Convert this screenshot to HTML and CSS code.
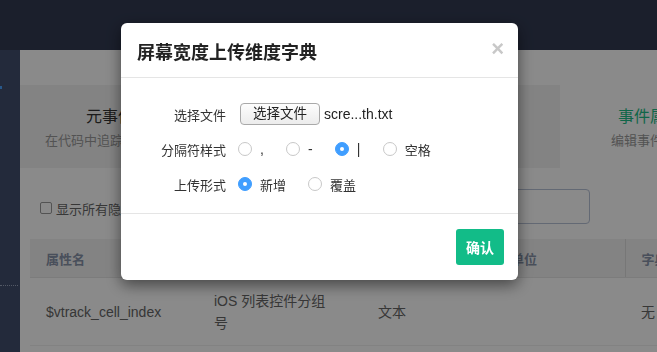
FILE: index.html
```html
<!DOCTYPE html>
<html lang="zh-CN">
<head>
    <meta charset="UTF-8">
    <meta name="viewport" content="width=device-width, initial-scale=1.0">
    <title>维度字典</title>
    <link rel="stylesheet" href="styles.css">
</head>
<body>

    <div class="navbar"></div>

    <div class="layout">
        <aside class="sidebar">
            <span class="side-mark"></span>
            <div class="side-dots"></div>
        </aside>

        <main class="main">
            <div class="crumb"></div>

            <div class="cards">
                <div class="card">
                    <div class="card-title">元事件</div>
                    <div class="card-desc">在代码中追踪的元事件</div>
                </div>
                <div class="card">
                    <div class="card-title">虚拟事件</div>
                    <div class="card-desc">组合多个元事件</div>
                </div>
                <div class="card">
                    <div class="card-title">用户属性</div>
                    <div class="card-desc">编辑用户属性</div>
                </div>
                <div class="card active">
                    <div class="card-title">事件属性</div>
                    <div class="card-desc">编辑事件属性</div>
                </div>
            </div>

            <div class="toolbar">
                <label class="check"><span class="check-box"></span>显示所有隐藏属性</label>
                <div class="search"></div>
            </div>

            <table class="props">
                <colgroup>
                    <col style="width: 168px">
                    <col style="width: 164px">
                    <col style="width: 107px">
                    <col style="width: 156px">
                    <col style="width: 120px">
                </colgroup>
                <thead>
                    <tr>
                        <th>属性名</th>
                        <th>显示名</th>
                        <th>类型</th>
                        <th>显示单位</th>
                        <th class="sep">字典</th>
                    </tr>
                </thead>
                <tbody>
                    <tr>
                        <td>$vtrack_cell_index</td>
                        <td class="wrap">iOS 列表控件分组号</td>
                        <td>文本</td>
                        <td></td>
                        <td>无</td>
                    </tr>
                </tbody>
            </table>
        </main>
    </div>

    <div class="backdrop"></div>

    <div class="modal">
        <div class="modal-header">
            <h3 class="modal-title">屏幕宽度上传维度字典</h3>
            <span class="close">&times;</span>
        </div>
        <div class="modal-body">
            <div class="form-row">
                <span class="form-label">选择文件</span>
                <div class="form-control">
                    <span class="file-btn">选择文件</span>
                    <span class="file-name">scre...th.txt</span>
                </div>
            </div>
            <div class="form-row">
                <span class="form-label">分隔符样式</span>
                <div class="form-control">
                    <label class="radio-item"><span class="radio"></span><span class="sym">,</span></label>
                    <label class="radio-item"><span class="radio"></span><span class="sym">-</span></label>
                    <label class="radio-item"><span class="radio checked"></span><span class="sym">|</span></label>
                    <label class="radio-item"><span class="radio"></span>空格</label>
                </div>
            </div>
            <div class="form-row">
                <span class="form-label">上传形式</span>
                <div class="form-control">
                    <label class="radio-item"><span class="radio checked"></span>新增</label>
                    <label class="radio-item"><span class="radio"></span>覆盖</label>
                </div>
            </div>
        </div>
        <div class="modal-footer">
            <button class="btn-primary">确认</button>
        </div>
    </div>

</body>
</html>
```

FILE: styles.css
```css
/* General Styling */
body {
    font-family: "Liberation Sans", "Noto Sans CJK SC", sans-serif;
    margin: 0;
    padding: 0;
    background-color: #fff;
    color: #333;
    overflow: hidden;
    height: 352px;
}

.navbar {
    height: 50px;
    background-color: #323a52;
}

.layout {
    display: flex;
    height: 302px;
}

/* Sidebar */
.sidebar {
    width: 20px;
    flex-shrink: 0;
    background-color: #414e6e;
    display: flex;
    flex-direction: column;
}

.side-mark {
    width: 2px;
    height: 3px;
    margin-top: 36px;
    background-color: #4aa3ff;
}

.side-dots {
    margin-top: 196px;
    width: 18px;
    border-top: 1px dotted #9aa4bd;
}

/* Main area */
.main {
    flex: 1;
    min-width: 0;
    overflow: hidden;
}

.crumb {
    height: 35px;
}

.cards {
    display: flex;
    height: 83px;
}

.card {
    width: 180px;
    flex-shrink: 0;
    background-color: #f3f3f3;
    text-align: center;
    padding-top: 20px;
    box-sizing: border-box;
}

.card.active {
    background-color: #fff;
}

.card-title {
    font-size: 16px;
    line-height: 24px;
    color: #333;
}

.card.active .card-title {
    color: #1ebc87;
}

.card-desc {
    margin-top: 3px;
    font-size: 13px;
    line-height: 18px;
    color: #999;
    white-space: nowrap;
}

.toolbar {
    display: flex;
    align-items: center;
    justify-content: space-between;
    padding: 21px 67px 15px 20px;
}

.check {
    display: flex;
    align-items: center;
    font-size: 13px;
    color: #666;
    margin-top: 3px;
}

.check-box {
    width: 10px;
    height: 10px;
    border: 1px solid #999;
    border-radius: 2px;
    margin-right: 4px;
    background-color: #fff;
}

.search {
    width: 220px;
    height: 33px;
    border: 1px solid #b8c2d6;
    border-radius: 4px;
}

/* Table */
.props {
    margin-left: 10px;
    width: 715px;
    table-layout: fixed;
    border-collapse: collapse;
}

.props th {
    height: 38px;
    padding: 0 16px;
    text-align: left;
    font-size: 13px;
    font-weight: bold;
    color: #8792a8;
    background-color: #f3f3f3;
    border-bottom: 1px solid #e6e6e6;
}

.props th.sep {
    border-left: 1px solid #dcdcdc;
}

.props td {
    height: 67px;
    padding: 0 16px;
    font-size: 14px;
    line-height: 22px;
    color: #666;
    border-bottom: 1px solid #f0f0f0;
}

.props td.wrap {
    padding-right: 32px;
}

/* Modal */
.backdrop {
    position: fixed;
    inset: 0;
    background-color: rgba(0, 0, 0, 0.46);
}

.modal {
    position: fixed;
    left: 121px;
    top: 23px;
    width: 397px;
    background-color: #fff;
    border-radius: 6px;
    box-shadow: 0 5px 15px rgba(0, 0, 0, 0.5);
}

.modal-header {
    display: flex;
    align-items: center;
    justify-content: space-between;
    height: 54px;
    padding: 0 14px 0 16px;
    border-bottom: 1px solid #e5e5e5;
}

.modal-title {
    margin: 0;
    font-size: 18px;
    font-weight: bold;
    color: #222;
    padding-top: 2px;
}

.close {
    font-size: 22px;
    font-weight: bold;
    color: #c8c8c8;
    line-height: 1;
    margin-top: -2px;
}

.modal-body {
    padding: 25px 16px 5px;
}

.form-row {
    display: flex;
    align-items: center;
    height: 22px;
    margin-bottom: 13px;
    font-size: 13px;
}

.form-label {
    width: 89px;
    text-align: right;
    color: #333;
}

.form-control {
    display: flex;
    align-items: center;
    margin-left: 12px;
}

.file-btn {
    margin-left: 2px;
    width: 78px;
    height: 20px;
    line-height: 20px;
    text-align: center;
    font-size: 13.5px;
    color: #222;
    border: 1px solid #a9a9a9;
    border-radius: 4px;
    background: linear-gradient(#fdfdfd, #ececec);
}

.file-name {
    margin-left: 4px;
    font-size: 14px;
    color: #222;
}

.radio-item {
    display: flex;
    align-items: center;
    margin-right: 22px;
    color: #333;
}

.radio {
    position: relative;
    width: 12px;
    height: 12px;
    border: 1px solid #c8c8c8;
    border-radius: 50%;
    margin-right: 8px;
}

.radio.checked {
    background-color: #409eff;
    border-color: #409eff;
}

.radio.checked::after {
    content: "";
    position: absolute;
    left: 4px;
    top: 4px;
    width: 4px;
    height: 4px;
    border-radius: 50%;
    background-color: #fff;
}

.sym {
    font-size: 14px;
    min-width: 4px;
}

.modal-footer {
    display: flex;
    justify-content: flex-end;
    padding: 15px 14px;
    border-top: 1px solid #e5e5e5;
}

.btn-primary {
    width: 48px;
    height: 36px;
    border: none;
    border-radius: 3px;
    background-color: #12bc88;
    color: #fff;
    font-family: inherit;
    font-size: 14px;
    font-weight: bold;
    padding: 0;
}
```
